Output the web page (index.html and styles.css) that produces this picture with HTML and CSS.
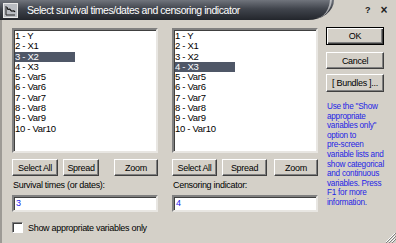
FILE: index.html
```html
<!DOCTYPE html>
<html lang="en">
<head>
    <meta charset="UTF-8">
    <title>Select survival times/dates and censoring indicator</title>
    <link rel="stylesheet" href="styles.css">
</head>
<body>
    <div class="window">
        <div class="titlebar">
            <div class="caption">
                <svg class="app-icon" width="15" height="15" viewBox="0 0 15 15">
                    <rect x="0.5" y="0.5" width="14" height="14" fill="#b9bcc2" stroke="#e8e8e8"/>
                    <path d="M3 3 L3 12 L12 12" fill="none" stroke="#222" stroke-width="1"/>
                    <path d="M4 4 C5 9 6 4 7.5 7 C9 10 10 6 12 9" fill="none" stroke="#111" stroke-width="1.2"/>
                </svg>
                <span class="title">Select survival times/dates and censoring indicator</span>
            </div>
            <div class="sys">
                <span class="help">?</span>
                <span class="close">&#215;</span>
            </div>
        </div>

        <div class="content">
            <div class="panel">
                <div class="listbox">
                    <div class="item">1 - Y</div>
                    <div class="item">2 - X1</div>
                    <div class="item"><span class="sel">3 - X2</span></div>
                    <div class="item">4 - X3</div>
                    <div class="item">5 - Var5</div>
                    <div class="item">6 - Var6</div>
                    <div class="item">7 - Var7</div>
                    <div class="item">8 - Var8</div>
                    <div class="item">9 - Var9</div>
                    <div class="item">10 - Var10</div>
                </div>
                <div class="btn-row">
                    <button class="btn select-all">Select All</button>
                    <button class="btn spread">Spread</button>
                    <button class="btn zoom">Zoom</button>
                </div>
                <div class="field-label">Survival times (or dates):</div>
                <div class="field">3</div>
            </div>

            <div class="panel panel-right">
                <div class="listbox">
                    <div class="item">1 - Y</div>
                    <div class="item">2 - X1</div>
                    <div class="item">3 - X2</div>
                    <div class="item"><span class="sel">4 - X3</span></div>
                    <div class="item">5 - Var5</div>
                    <div class="item">6 - Var6</div>
                    <div class="item">7 - Var7</div>
                    <div class="item">8 - Var8</div>
                    <div class="item">9 - Var9</div>
                    <div class="item">10 - Var10</div>
                </div>
                <div class="btn-row">
                    <button class="btn select-all">Select All</button>
                    <button class="btn spread">Spread</button>
                    <button class="btn zoom">Zoom</button>
                </div>
                <div class="field-label">Censoring indicator:</div>
                <div class="field">4</div>
            </div>

            <div class="side">
                <button class="btn side-btn ok">OK</button>
                <button class="btn side-btn cancel">Cancel</button>
                <button class="btn side-btn">[ Bundles ]...</button>
                <p class="hint">Use the "Show<br>appropriate<br>variables only"<br>option to<br>pre-screen<br>variable lists and<br>show categorical<br>and continuous<br>variables. Press<br>F1 for more<br>information.</p>
            </div>
        </div>

        <div class="check-row">
            <span class="checkbox"></span>
            <span>Show appropriate variables only</span>
        </div>

        <svg class="grip" width="11" height="11" viewBox="0 0 11 11">
            <path d="M10 1 L1 10 M10 4 L4 10 M10 7 L7 10" stroke="#fff" stroke-width="1"/>
            <path d="M11 1 L1 11 M11 4 L4 11 M11 7 L7 11" stroke="#808080" stroke-width="1"/>
        </svg>
    </div>
</body>
</html>
```

FILE: styles.css
```css
* {
    margin: 0;
    padding: 0;
    box-sizing: border-box;
}

body {
    width: 396px;
    height: 243px;
    overflow: hidden;
    background: #d4d0c8;
    font-family: "Liberation Sans", Arial, sans-serif;
    font-size: 9px;
    letter-spacing: -0.3px;
    color: #000;
}

.window {
    position: relative;
    width: 396px;
    height: 243px;
    border-left: 2px solid #9d9a95;
}

/* title bar */
.titlebar {
    display: flex;
    height: 20px;
    margin-left: -2px;
}

.caption {
    position: relative;
    display: flex;
    align-items: center;
    width: 334px;
    height: 20px;
    padding-left: 3px;
    background: linear-gradient(#70747c, #40444c 45%, #23262c);
    border-bottom-right-radius: 26px 20px;
}

.caption::after {
    content: "";
    position: absolute;
    right: 2px;
    top: -4px;
    width: 16px;
    height: 22px;
    border-right: 2px solid rgba(255, 255, 255, 0.55);
    border-bottom-right-radius: 16px 20px;
}

.app-icon {
    flex: none;
}

.title {
    margin-left: 9px;
    color: #fff;
    font-size: 10.5px;
    letter-spacing: -0.45px;
    white-space: nowrap;
}

.sys {
    display: flex;
    align-items: center;
    gap: 10px;
    padding-left: 31px;
    font-weight: bold;
    letter-spacing: 0;
    color: #222;
}

.help {
    font-size: 9px;
}

.close {
    font-size: 12px;
}

/* dialog body */
.content {
    display: flex;
    padding: 8px 0 0 10px;
}

.panel {
    display: flex;
    flex-direction: column;
    width: 146px;
}

.panel-right {
    margin-left: 14px;
}

.listbox {
    height: 125px;
    padding: 1px 0 0 1px;
    background: #fff;
    border: 2px solid;
    border-color: #808080 #e8e6e2 #e8e6e2 #808080;
    box-shadow: inset 1px 1px 0 #404040;
}

.item {
    height: 10.3px;
    line-height: 10.3px;
    font-size: 9.5px;
    white-space: nowrap;
}

.sel {
    display: inline-block;
    width: 60px;
    background: #4f5767;
    color: #fff;
}

.btn-row {
    display: flex;
    margin-top: 6px;
}

.btn {
    height: 17px;
    background: #d4d0c8;
    font-family: inherit;
    font-size: 9px;
    letter-spacing: -0.3px;
    color: #000;
    border: 1px solid;
    border-color: #fff #404040 #404040 #fff;
    box-shadow: inset -1px -1px 0 #808080;
}

.select-all {
    width: 46px;
}

.spread {
    width: 36px;
    margin-left: 5px;
}

.panel-right .select-all {
    width: 45px;
}

.panel-right .spread {
    width: 45px;
}

.zoom {
    width: 44px;
    margin-left: auto;
}

.field-label {
    margin-top: 3px;
    height: 13px;
    line-height: 13px;
    padding-left: 1px;
}

.field {
    height: 17px;
    margin-top: 3px;
    padding: 1px 0 0 2px;
    background: #fff;
    color: #2222ee;
    border: 2px solid;
    border-color: #808080 #e8e6e2 #e8e6e2 #808080;
    box-shadow: inset 1px 1px 0 #404040;
}

.side {
    display: flex;
    flex-direction: column;
    width: 58px;
    margin-left: 8px;
    margin-top: -1px;
}

.side-btn {
    height: 18px;
    margin-bottom: 5px;
}

.side-btn.ok {
    margin-bottom: 7px;
    border: 1px solid #000;
    box-shadow: inset 1px 1px 0 #fff, inset -1px -1px 0 #404040, inset -2px -2px 0 #808080;
}

.side-btn.cancel {
    height: 17px;
}

.hint {
    margin-top: 5px;
    padding-left: 1px;
    color: #1f1fe6;
    font-size: 8.2px;
    letter-spacing: -0.25px;
    line-height: 9.6px;
    white-space: nowrap;
}

.check-row {
    display: flex;
    align-items: center;
    margin: 10px 0 0 10px;
}

.checkbox {
    width: 11px;
    height: 11px;
    margin-right: 5px;
    background: #fff;
    border: 1px solid;
    border-color: #808080 #fff #fff #808080;
    box-shadow: inset 1px 1px 0 #404040;
}

.grip {
    position: absolute;
    right: 0;
    bottom: 0;
}
```
